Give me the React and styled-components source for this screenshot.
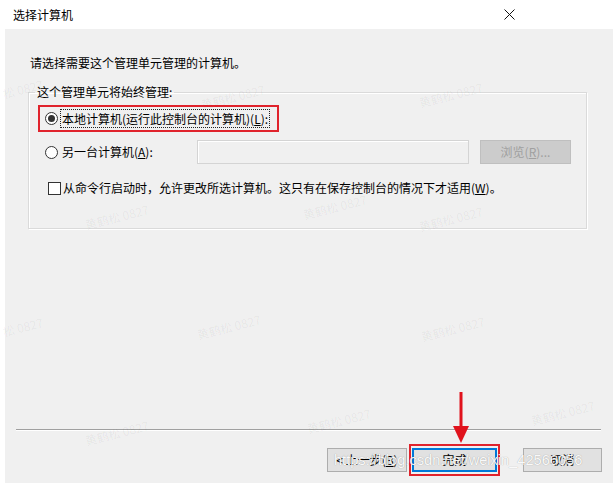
import React from "react";
import styled, { createGlobalStyle } from "styled-components";

const GlobalStyle = createGlobalStyle`
  html, body {
    margin: 0;
    padding: 0;
    background: #fff;
  }
  body {
    font-family: "Noto Sans CJK SC", "Microsoft YaHei", sans-serif;
    font-size: 12px;
    color: #000;
  }
`;

const Window = styled.div`
  position: relative;
  width: 613px;
  height: 485px;
  overflow: hidden;
  background: #fff;
`;

const TitleBar = styled.div`
  height: 29px;
  display: flex;
  align-items: center;
  justify-content: space-between;
  padding: 0 98px 0 13px;
  line-height: 16px;
`;

const CloseIcon = styled.svg`
  width: 11px;
  height: 11px;
  display: block;
`;

const Panel = styled.div`
  margin-left: 5px;
  height: 454px;
  background: #f0f0f0;
  display: flex;
  flex-direction: column;
`;

const Content = styled.div`
  padding: 26px 0 0 23px;
  line-height: 16px;
`;

const Intro = styled.div`
  padding-left: 2px;
  margin-bottom: 13px;
`;

const GroupBox = styled.fieldset`
  margin: 0;
  width: 559px;
  box-sizing: border-box;
  min-width: 0;
  padding: 0 0 32px 0;
  border: 1px solid #dadada;
  box-shadow: inset 1px 1px 0 #fff, 1px 1px 0 #fff;
`;

const Legend = styled.legend`
  margin-left: 6px;
  padding: 0 2px;
  line-height: 16px;
`;

const Highlight = styled.div`
  display: inline-flex;
  align-items: center;
  border: 2px solid #e0232c;
  padding: ${(p) => p.$pad || "0"};
  margin-left: ${(p) => p.$ml || "0"};
`;

const OptionRow = styled.div`
  display: flex;
  align-items: center;
  height: ${(p) => p.$h || "24px"};
  margin-top: ${(p) => p.$mt || "0"};
  padding-left: ${(p) => p.$pl || "0"};
`;

const Radio = styled.span`
  width: 13px;
  height: 13px;
  box-sizing: border-box;
  border-radius: 50%;
  border: 1px solid #333;
  background: #fff;
  display: flex;
  align-items: center;
  justify-content: center;
  flex: 0 0 auto;
  margin-right: 3px;

  &::after {
    content: "";
    width: 7px;
    height: 7px;
    border-radius: 50%;
    background: #333;
    display: ${(p) => (p.$checked ? "block" : "none")};
  }
`;

const Checkbox = styled.span`
  width: 13px;
  height: 13px;
  box-sizing: border-box;
  border: 1px solid #333;
  background: #fff;
  flex: 0 0 auto;
  margin-right: 2px;
`;

const Focus = styled.span`
  outline: 1px dotted #222;
  outline-offset: 0;
  padding: 0 1px;
  line-height: 17px;
`;

const Label = styled.span`
  flex: 0 0 auto;
  width: ${(p) => p.$w || "auto"};
  padding-left: 1px;
`;

const U = styled.span`
  text-decoration: underline;
`;

const TextBox = styled.div`
  width: 272px;
  height: 24px;
  box-sizing: border-box;
  border: 1px solid #d4d4d4;
  box-shadow: inset 1px 1px 0 #fff;
  background: #f0f0f0;
  margin-right: 11px;
`;

const Button = styled.div`
  width: ${(p) => p.$w || "79px"};
  height: 24px;
  box-sizing: border-box;
  display: flex;
  align-items: center;
  justify-content: center;
  background: ${(p) => (p.$disabled ? "#cccccc" : "#e1e1e1")};
  color: ${(p) => (p.$disabled ? "#a0a0a0" : "#000")};
  border: ${(p) =>
    p.$default ? "2px solid #0078d7" : p.$disabled ? "1px solid #bfbfbf" : "1px solid #adadad"};
  line-height: 16px;
`;

const Footer = styled.div`
  margin-top: auto;
  padding: 0 12px 7px 11px;
`;

const Separator = styled.div`
  height: 1px;
  background: #a0a0a0;
  box-shadow: 0 1px 0 #fff;
  margin-bottom: 14px;
`;

const ButtonRow = styled.div`
  display: flex;
  align-items: center;
  justify-content: flex-end;
  height: 32px;
  gap: 2px;
`;

const CancelSlot = styled.div`
  margin-left: 21px;
  margin-right: -1px;
`;

const Arrow = styled.svg`
  position: absolute;
  left: 452px;
  top: 392px;
  width: 18px;
  height: 52px;
`;

const Watermark = styled.span`
  position: absolute;
  left: ${(p) => p.$x}px;
  top: ${(p) => p.$y}px;
  transform: rotate(-14deg);
  color: rgba(0, 0, 0, 0.055);
  font-size: 12px;
  white-space: nowrap;
  pointer-events: none;
`;

const UrlMark = styled.span`
  position: absolute;
  left: 334px;
  top: 452px;
  font-family: "Liberation Sans", Arial, sans-serif;
  font-size: 14.6px;
  color: rgba(255, 255, 255, 0.95);
  text-shadow: 0 0 1px rgba(0, 0, 0, 0.35);
  white-space: nowrap;
  pointer-events: none;
`;

const marks = [
  [2, 80, "松 0827"], [200, 88], [418, 86],
  [302, 198], [84, 208], [418, 210],
  [2, 318, "松 0827"], [196, 318], [420, 320],
  [84, 424], [306, 412], [530, 404],
];

export default function App() {
  return (
    <>
      <GlobalStyle />
      <Window>
        <TitleBar>
          <span>选择计算机</span>
          <CloseIcon viewBox="0 0 11 11">
            <path d="M0.5 0.5 L10.5 10.5 M10.5 0.5 L0.5 10.5" stroke="#111" strokeWidth="1" fill="none" />
          </CloseIcon>
        </TitleBar>
        <Panel>
          <Content>
            <Intro>请选择需要这个管理单元管理的计算机。</Intro>
            <GroupBox>
              <Legend>这个管理单元将始终管理:</Legend>
              <OptionRow $h="27px" $mt="5px" $pl="9px">
                <Highlight $pad="0 8px 0 5px" style={{ height: "23px" }}>
                  <Radio $checked />
                  <Focus>本地计算机(运行此控制台的计算机)(<U>L</U>):</Focus>
                </Highlight>
              </OptionRow>
              <OptionRow $mt="8px" $pl="16px">
                <Radio />
                <Label $w="135px">另一台计算机(<U>A</U>):</Label>
                <TextBox />
                <Button $disabled $w="91px">浏览(<U>R</U>)...</Button>
              </OptionRow>
              <OptionRow $h="16px" $mt="16px" $pl="19px">
                <Checkbox />
                <span>从命令行启动时，允许更改所选计算机。这只有在保存控制台的情况下才适用(<U>W</U>)。</span>
              </OptionRow>
            </GroupBox>
          </Content>
          <Footer>
            <Separator />
            <ButtonRow>
              <Button $w="80px">&lt; 上一步(<U>B</U>)</Button>
              <Highlight $pad="2px 1px">
                <Button $default $w="85px">完成</Button>
              </Highlight>
              <CancelSlot>
                <Button $w="79px">取消</Button>
              </CancelSlot>
            </ButtonRow>
          </Footer>
        </Panel>
        {marks.map(([x, y, t], i) => (
          <Watermark key={i} $x={x} $y={y}>{t || "黄鹤松 0827"}</Watermark>
        ))}
        <UrlMark>https://blog.csdn.net/weixin_42566056</UrlMark>
        <Arrow viewBox="0 0 18 52">
          <rect x="7.5" y="0" width="3" height="38" fill="#e0121c" />
          <polygon points="1,34 17,34 9,51" fill="#e0121c" />
        </Arrow>
      </Window>
    </>
  );
}
